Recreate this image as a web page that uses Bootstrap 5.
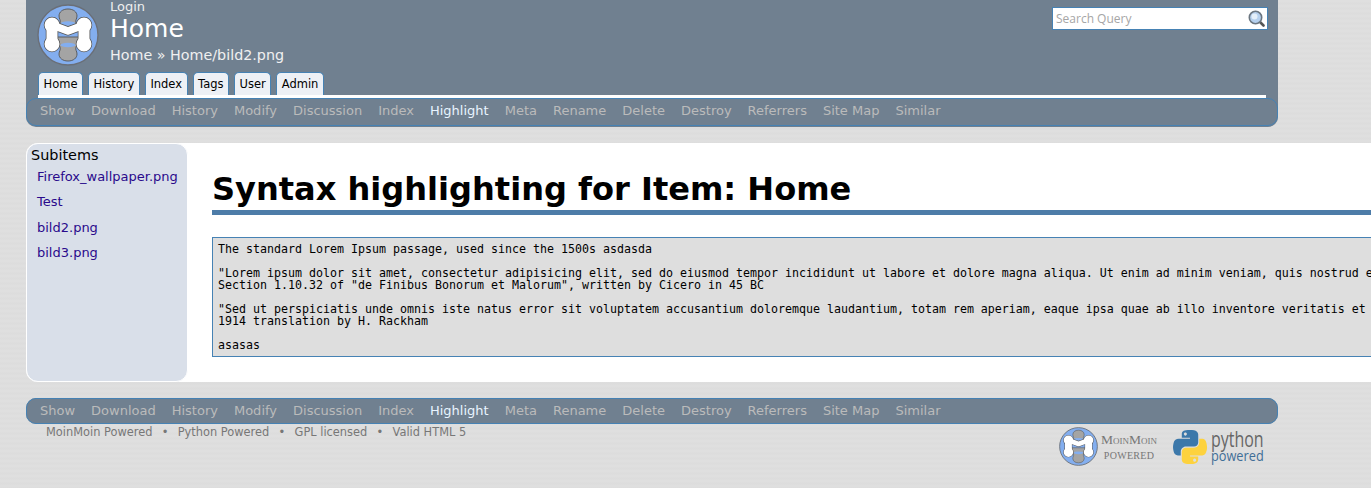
<!DOCTYPE html>
<html lang="en">
<head>
    <meta charset="UTF-8">
    <meta name="viewport" content="width=device-width, initial-scale=1">
    <title>Syntax highlighting for Item: Home</title>
    <link href="https://cdn.jsdelivr.net/npm/bootstrap@5.3.0/dist/css/bootstrap.min.css" rel="stylesheet">
    <script src="https://cdn.jsdelivr.net/npm/bootstrap@5.3.0/dist/js/bootstrap.bundle.min.js"></script>

    <style>
        html, body {
            overflow: hidden;
            height: 488px;
        }
        body {
            font-family: "DejaVu Sans", sans-serif;
            color: #000;
            background: #dedede repeating-linear-gradient(180deg, #dfdfdf 0, #dfdfdf 2px, #dcdcdc 3px, #dedede 5px);
        }
        a { text-decoration: none; }
        .moin-header {
            width: 1252px;
            height: 127px;
            margin-left: 26px;
            background: #708090;
            border-radius: 0 0 10px 10px;
        }
        .moin-top { padding: 0 10px 0 11px; height: 66px; gap: 11px; }
        .moin-brand { gap: 11px; }
        .moin-logo { width: 62px; height: 62px; margin-top: 4px; flex: none; }
        .moin-login { font-size: 13px; line-height: 14px; color: #eee; display: block; }
        .moin-title { font-size: 25px; line-height: 30px; color: #fff; margin: 0; font-weight: 400; }
        .moin-crumbs { font-size: 14.3px; line-height: 20px; color: #f0f0f0; margin-top: 1px; }
        .moin-crumbs a { color: #f0f0f0; }
        .moin-search {
            width: 216px;
            height: 23px;
            margin-top: 7px;
            background: #fff;
            border: 1px solid #4682b4;
            padding: 0 2px 0 3px;
            font: 12px "Open Sans", sans-serif;
            color: #a6a6a6;
        }
        .moin-tabs { margin: 6px 0 0 12px; gap: 5px; height: 23px; }
        .moin-tabs a {
            display: block;
            height: 23px;
            background: #edf0f5;
            color: #000;
            border: 1px solid #4682b4;
            border-bottom: 0;
            border-radius: 5px 5px 0 0;
            padding: 0 4.5px;
            font-size: 11.5px;
            line-height: 23px;
        }
        .moin-rule { height: 3px; background: #fff; margin: 0 12px; }
        .moin-menu {
            gap: 16px;
            height: 28px;
            padding-left: 13px;
            font-size: 13px;
            line-height: 24px;
            border: 1px solid #4682b4;
            border-radius: 10px;
        }
        .moin-menu a { color: #bbb; }
        .moin-menu a.is-current { color: #e8f4ff; }
        .moin-page {
            width: max-content;
            margin: 16px 0 16px 26px;
            background: #fff;
            border-radius: 12px 0 0 12px;
        }
        .moin-side {
            width: 162px;
            flex: none;
            background: #d9dfe9;
            border: 1px solid #fff;
            border-radius: 12px;
            padding: 2px 4px;
        }
        .moin-side-title { font-size: 14.4px; line-height: 18px; }
        .moin-side ul { margin: 0; padding: 0 0 0 6px; list-style: none; }
        .moin-side li { font-size: 13px; line-height: 25.4px; }
        .moin-side a { color: #2a0a8c; }
        .moin-main { padding: 26px 0 25px 24px; }
        .moin-main h1 {
            font: 700 32.05px/40px "DejaVu Sans", sans-serif;
            margin: 0 0 22px;
            padding-bottom: 1px;
            border-bottom: 5px solid #4d7ca8;
        }
        .moin-main pre {
            margin: 0;
            padding: 5px;
            background: #dedede;
            border: 1px solid #4682b4;
            font: 11.63px/12px "DejaVu Sans Mono", monospace;
            white-space: pre;
            overflow: visible;
        }
        .moin-footbar {
            width: 1252px;
            margin-left: 26px;
            background: #708090;
            border-radius: 10px;
        }
        .moin-footbar .moin-menu { height: 26px; line-height: 24px; }
        .moin-foot { width: 1252px; margin-left: 26px; }
        .moin-credits { gap: 9.3px; font-size: 11.4px; line-height: 14px; color: #777; padding: 1px 0 0 20px; height: 16px; }
        .moin-credits a { color: #777; }
        .moin-badge-row { gap: 14px; margin-right: 15px; padding-top: 3px; }
        .moin-badge-text { font-family: "Liberation Serif", serif; color: #777; text-align: center; width: 60px; margin-left: 1px; }
        .moin-badge-text b { display: block; font-weight: 400; font-variant: small-caps; font-size: 13.5px; line-height: 19px; white-space: nowrap; }
        .moin-badge-text span { display: block; font-size: 10px; line-height: 14px; letter-spacing: .03em; }
        .py-text { font-family: "Open Sans", sans-serif; width: 52px; margin-left: 4px; white-space: nowrap; }
        .py-text b { display: block; font-weight: 400; color: #666; font-size: 21px; line-height: 18px; transform: scaleX(.76); transform-origin: left; }
        .py-text span { display: block; color: #3f6e97; font-size: 14.5px; line-height: 16px; transform: scaleX(.88); transform-origin: left; }
    </style>
</head>
<body>

    <svg width="0" height="0" class="position-absolute">
        <symbol id="moin-mark" viewBox="0 0 62 62">
            <circle cx="31" cy="31" r="30" fill="#83aeef" stroke="#6a6f78" stroke-width="1.4"/>
            <!-- grey lobes behind the M -->
            <path d="M31 5c-5.500 0-9 3-9 7 0 3 2 4 1 7l-1 6h18l-1-6c-1-3 1-4 1-7 0-4-3.500-7-9-7z" fill="#a4a4a4" stroke="#555" stroke-width=".9"/>
            <path d="M31 57c-5.500 0-9-3-9-7 0-3 2-4 1-7l-4-10h24l-4 10c-1 3 1 4 1 7 0 4-3.500 7-9 7z" fill="#a4a4a4" stroke="#555" stroke-width=".9"/>
            <ellipse cx="31" cy="19.500" rx="7.500" ry="2.200" fill="#83aeef"/>
            <ellipse cx="31" cy="41" rx="7.500" ry="2.200" fill="#83aeef"/>
            <!-- the M, outline first then the white body -->
            <g fill="none" stroke="#555" stroke-linecap="round" stroke-linejoin="round">
                <path d="M15 40V21M47 40V21" stroke-width="12.500"/>
                <path d="M15 21L31 27L47 21" stroke-width="9"/>
                <path d="M15 40h0M47 40h0M15 21h0M47 21h0" stroke-width="16.500"/>
            </g>
            <g fill="none" stroke="#fff" stroke-linecap="round" stroke-linejoin="round">
                <path d="M15 40V21M47 40V21" stroke-width="11"/>
                <path d="M15 21L31 27L47 21" stroke-width="7.500"/>
                <path d="M15 40h0M47 40h0M15 21h0M47 21h0" stroke-width="15"/>
            </g>
        </symbol>
    </svg>

    <header class="moin-header d-flex flex-column">
        <div class="moin-top d-flex justify-content-between">
            <div class="moin-brand d-flex">
                <svg class="moin-logo" viewBox="0 0 62 62"><use href="#moin-mark"/></svg>
                <div>
                    <a class="moin-login" href="#">Login</a>
                    <h2 class="moin-title">Home</h2>
                    <div class="moin-crumbs"><a href="#">Home</a> » <a href="#">Home/bild2.png</a></div>
                </div>
            </div>
            <div class="moin-search d-flex align-items-center justify-content-between">
                <span>Search Query</span>
                <svg width="17" height="17" viewBox="0 0 17 17">
                    <path d="M11 11l4.500 4.500" stroke="#555" stroke-width="2.600" stroke-linecap="round"/>
                    <circle cx="7.500" cy="7.500" r="6.200" fill="#b5d0ee" stroke="#6b7680" stroke-width="1.600"/>
                    <circle cx="6.500" cy="6.500" r="3" fill="#e4effa"/>
                </svg>
            </div>
        </div>
        <ul class="moin-tabs nav">
            <li><a href="#">Home</a></li>
            <li><a href="#">History</a></li>
            <li><a href="#">Index</a></li>
            <li><a href="#">Tags</a></li>
            <li><a href="#">User</a></li>
            <li><a href="#">Admin</a></li>
        </ul>
        <div class="moin-rule"></div>
        <nav class="moin-menu d-flex">
            <a href="#">Show</a><a href="#">Download</a><a href="#">History</a><a href="#">Modify</a><a href="#">Discussion</a><a href="#">Index</a><a class="is-current" href="#">Highlight</a><a href="#">Meta</a><a href="#">Rename</a><a href="#">Delete</a><a href="#">Destroy</a><a href="#">Referrers</a><a href="#">Site Map</a><a href="#">Similar</a>
        </nav>
    </header>

    <div class="moin-page d-flex">
        <aside class="moin-side">
            <div class="moin-side-title">Subitems</div>
            <ul>
                <li><a href="#">Firefox_wallpaper.png</a></li>
                <li><a href="#">Test</a></li>
                <li><a href="#">bild2.png</a></li>
                <li><a href="#">bild3.png</a></li>
            </ul>
        </aside>
        <main class="moin-main">
            <h1>Syntax highlighting for Item: Home</h1>
<pre>The standard Lorem Ipsum passage, used since the 1500s asdasda

"Lorem ipsum dolor sit amet, consectetur adipisicing elit, sed do eiusmod tempor incididunt ut labore et dolore magna aliqua. Ut enim ad minim veniam, quis nostrud exercitation ullamco laboris nisi ut aliquip ex ea commodo consequat."
Section 1.10.32 of "de Finibus Bonorum et Malorum", written by Cicero in 45 BC

"Sed ut perspiciatis unde omnis iste natus error sit voluptatem accusantium doloremque laudantium, totam rem aperiam, eaque ipsa quae ab illo inventore veritatis et quasi architecto beatae vitae dicta sunt explicabo."
1914 translation by H. Rackham

asasas</pre>
        </main>
    </div>

    <div class="moin-footbar">
        <nav class="moin-menu d-flex">
            <a href="#">Show</a><a href="#">Download</a><a href="#">History</a><a href="#">Modify</a><a href="#">Discussion</a><a href="#">Index</a><a class="is-current" href="#">Highlight</a><a href="#">Meta</a><a href="#">Rename</a><a href="#">Delete</a><a href="#">Destroy</a><a href="#">Referrers</a><a href="#">Site Map</a><a href="#">Similar</a>
        </nav>
    </div>

    <footer class="moin-foot d-flex justify-content-between">
        <div class="moin-credits d-flex">
            <a href="#">MoinMoin Powered</a><span>•</span><a href="#">Python Powered</a><span>•</span><a href="#">GPL licensed</a><span>•</span><a href="#">Valid HTML 5</a>
        </div>
        <div class="moin-badge-row d-flex">
            <div class="d-flex align-items-center">
                <svg width="39" height="39" viewBox="0 0 62 62"><use href="#moin-mark"/></svg>
                <div class="moin-badge-text"><b>MoinMoin</b><span>POWERED</span></div>
            </div>
            <div class="d-flex align-items-center">
                <svg width="34" height="34" viewBox="0 0 111 111">
                    <path fill="#3c78aa" d="M54.919 0c-4.584.022-8.961.413-12.813 1.095C30.76 3.099 28.7 7.295 28.7 15.032v10.219h26.813v3.406H18.638c-7.793 0-14.616 4.684-16.75 13.594-2.462 10.213-2.571 16.586 0 27.25 1.906 7.938 6.457 13.594 14.25 13.594h9.219v-12.25c0-8.85 7.657-16.656 16.75-16.656h26.782c7.454 0 13.406-6.138 13.406-13.625v-25.531c0-7.266-6.13-12.725-13.406-13.937C64.282.328 59.502-.02 54.918.001zm-14.5 8.22c2.77 0 5.031 2.299 5.031 5.125 0 2.816-2.262 5.093-5.031 5.093-2.78 0-5.031-2.277-5.031-5.093 0-2.826 2.252-5.125 5.031-5.125z"/>
                    <path fill="#fdd23e" d="M85.638 28.657v11.906c0 9.231-7.826 17-16.750 17H42.106c-7.336 0-13.406 6.278-13.406 13.625v25.532c0 7.266 6.319 11.540 13.406 13.625 8.488 2.496 16.627 2.947 26.782 0 6.750-1.954 13.406-5.888 13.406-13.625V86.500H55.513v-3.405H95.700c7.793 0 10.696-5.436 13.406-13.594 2.800-8.399 2.680-16.476 0-27.250-1.927-7.758-5.606-13.594-13.406-13.594zM70.575 93.313c2.780 0 5.031 2.277 5.031 5.093 0 2.826-2.252 5.125-5.031 5.125-2.770 0-5.031-2.299-5.031-5.125 0-2.816 2.262-5.093 5.031-5.093z"/>
                </svg>
                <div class="py-text"><b>python</b><span>powered</span></div>
            </div>
        </div>
    </footer>

</body>
</html>
